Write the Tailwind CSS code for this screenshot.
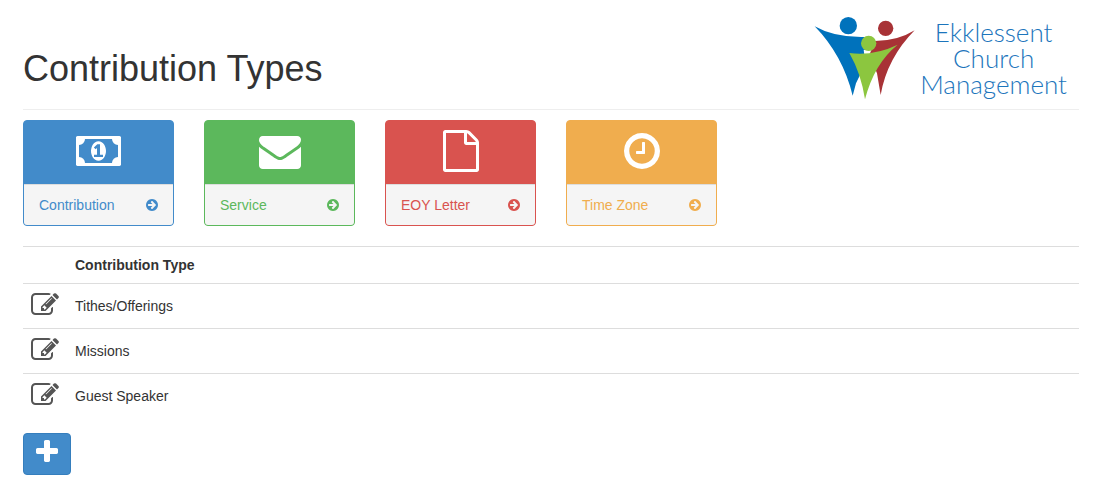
<!doctype html>
<html lang="en">
<head>
  <meta charset="UTF-8">
  <meta name="viewport" content="width=device-width, initial-scale=1.0">
  <title>Contribution Types</title>
  <script src="https://cdn.jsdelivr.net/npm/@tailwindcss/browser@4"></script>
</head>
<body class="bg-white pr-6 pl-[23px] font-['Liberation_Sans',Arial,sans-serif] text-sm text-[#333]">
  <svg class="hidden">
    <symbol id="arrow" viewBox="128 0 1536 1792">
      <path d="M1413 896q0-27-18-45l-91-91-362-362q-18-18-45-18t-45 18l-91 91q-18 18-18 45t18 45l189 189h-502q-26 0-45 19t-19 45v128q0 26 19 45t45 19h502l-189 189q-18 18-18 45t18 45l91 91q18 18 45 18t45-18l362-362 91-91q18-18 18-45zm251 0q0 209-103 385.5t-279.5 279.5-385.5 103-385.5-103-279.5-279.5-103-385.5 103-385.5 279.5-279.5 385.5-103 385.5 103 279.5 279.5 103 385.5z"/>
    </symbol>
    <symbol id="edit" viewBox="0 0 1792 1792">
      <path d="M888 1184l116-116-152-152-116 116v56h96v96h56zm440-720q-16-16-33 1l-350 350q-17 17-1 33t33-1l350-350q17-17 1-33zm80 594v190q0 119-84.5 203.5t-203.5 84.5h-832q-119 0-203.5-84.5t-84.5-203.5v-832q0-119 84.5-203.5t203.5-84.5h832q63 0 117 25 15 7 18 23 3 17-9 29l-49 49q-14 14-32 8-23-6-45-6h-832q-66 0-113 47t-47 113v832q0 66 47 113t113 47h832q66 0 113-47t47-113v-126q0-13 9-22l64-64q15-15 35-7t20 29zm-96-738l288 288-672 672h-288v-288zm444 132l-92 92-288-288 92-92q28-28 68-28t68 28l152 152q28 28 28 68t-28 68z"/>
    </symbol>
  </svg>

  <header class="flex items-end justify-between border-b border-[#eee] pt-4">
    <h1 class="pb-5 text-4xl leading-10">Contribution Types</h1>
    <div class="flex items-center gap-1 pr-3 pb-[9px]">
      <svg class="h-[84px] w-[102px]" viewBox="39 33 306 252">
        <path fill="#0072bc" d="M41 64Q100 98 190 96L206 150L165 235L155 272Q125 150 41 64Z"/>
        <path fill="#a83236" d="M341 76Q290 108 222 108L205 150L228 205L239 270Q258 160 341 76Z"/>
        <path fill="#fff" d="M188 134L206 136L204 148L190 149Z"/>
        <circle cx="142" cy="62" r="26" fill="#0072bc"/>
        <circle cx="254" cy="70" r="23" fill="#a83236"/>
        <path fill="#8cc63f" d="M145 144Q220 153 290 119Q220 175 192 283Q180 205 145 144Z"/>
        <circle cx="203" cy="115" r="23" fill="#8cc63f"/>
      </svg>
      <p class="text-center font-['Lato',sans-serif] text-[26px] leading-[26px] font-light text-[#1c75bc]">Ekklessent<br>Church<br>Management</p>
    </div>
  </header>

  <nav class="mt-[10px] flex flex-wrap gap-[30px]">
    <a href="#" class="w-[151px] overflow-hidden rounded border border-[#428bca] bg-[#428bca] text-[#428bca]">
      <div class="flex justify-center pt-[9px] pb-3">
        <svg class="h-[42px] w-[45px] fill-white" viewBox="0 0 1920 1792"><path d="M768 1152h384v-96h-128v-448h-114l-148 137 77 80q42-37 55-57h2v288h-128v96zm512-256q0 70-21 142t-59.5 134-101.5 101-138 39-138-39-101.5-101-59.5-134-21-142 21-142 59.5-134 101.5-101 138-39 138 39 101.5 101 59.5 134 21 142zm512 256v-512q-106 0-181-75t-75-181h-1152q0 106-75 181t-181 75v512q106 0 181 75t75 181h1152q0-106 75-181t181-75zm128-832v1152q0 26-19 45t-45 19h-1792q-26 0-45-19t-19-45v-1152q0-26 19-45t45-19h1792q26 0 45 19t19 45z"/></svg>
      </div>
      <div class="flex items-center justify-between border-t border-[#ddd] bg-[#f5f5f5] px-[15px] py-[10px]">
        <span>Contribution</span>
        <svg class="h-[14px] w-3 fill-current"><use href="#arrow"/></svg>
      </div>
    </a>
    <a href="#" class="w-[151px] overflow-hidden rounded border border-[#5cb85c] bg-[#5cb85c] text-[#5cb85c]">
      <div class="flex justify-center pt-[9px] pb-3">
        <svg class="size-[42px] fill-white" viewBox="0 0 1792 1792"><path d="M1792 710v794q0 66-47 113t-113 47h-1472q-66 0-113-47t-47-113v-794q44 49 101 87 362 246 497 345 57 42 92.5 65.5t94.5 48 110 24.5h2q51 0 110-24.5t94.5-48 92.5-65.5q170-123 498-345 57-39 100-87zm0-294q0 79-49 151t-122 123q-376 261-468 325-10 7-42.5 31t-54 38.5-52 32.5-57.5 27-50 9h-2q-23 0-50-9t-57.5-27-52-32.5-54-38.5-42.5-31q-91-64-262-182.5t-205-142.5q-62-42-117-115.5t-55-136.5q0-78 41.5-130t118.5-52h1472q65 0 112.5 47t47.5 113z"/></svg>
      </div>
      <div class="flex items-center justify-between border-t border-[#ddd] bg-[#f5f5f5] px-[15px] py-[10px]">
        <span>Service</span>
        <svg class="h-[14px] w-3 fill-current"><use href="#arrow"/></svg>
      </div>
    </a>
    <a href="#" class="w-[151px] overflow-hidden rounded border border-[#d9534f] bg-[#d9534f] text-[#d9534f]">
      <div class="flex justify-center pt-[9px] pb-3">
        <svg class="size-[42px] fill-white" viewBox="0 0 1792 1792"><path d="M1596 380q28 28 48 76t20 88v1152q0 40-28 68t-68 28h-1344q-40 0-68-28t-28-68v-1600q0-40 28-68t68-28h896q40 0 88 20t76 48zm-444-244v376h376q-10-29-22-41l-313-313q-12-12-41-22zm384 1528v-1024h-416q-40 0-68-28t-28-68v-416h-768v1536h1280z"/></svg>
      </div>
      <div class="flex items-center justify-between border-t border-[#ddd] bg-[#f5f5f5] px-[15px] py-[10px]">
        <span>EOY Letter</span>
        <svg class="h-[14px] w-3 fill-current"><use href="#arrow"/></svg>
      </div>
    </a>
    <a href="#" class="w-[151px] overflow-hidden rounded border border-[#f0ad4e] bg-[#f0ad4e] text-[#f0ad4e]">
      <div class="flex justify-center pt-[9px] pb-3">
        <svg class="size-[42px] fill-white" viewBox="0 0 1792 1792"><path d="M1024 544v448q0 14-9 23t-23 9h-320q-14 0-23-9t-9-23v-64q0-14 9-23t23-9h224v-352q0-14 9-23t23-9h64q14 0 23 9t9 23zm416 352q0-148-73-273t-198-198-273-73-273 73-198 198-73 273 73 273 198 198 273 73 273-73 198-198 73-273zm224 0q0 209-103 385.5t-279.5 279.5-385.5 103-385.5-103-279.5-279.5-103-385.5 103-385.5 279.5-279.5 385.5-103 385.5 103 279.5 279.5 103 385.5z"/></svg>
      </div>
      <div class="flex items-center justify-between border-t border-[#ddd] bg-[#f5f5f5] px-[15px] py-[10px]">
        <span>Time Zone</span>
        <svg class="h-[14px] w-3 fill-current"><use href="#arrow"/></svg>
      </div>
    </a>
  </nav>

  <table class="mt-5 w-full text-left">
    <thead>
      <tr class="border-t border-[#ddd]">
        <th class="w-11 p-2"></th>
        <th class="p-2">Contribution Type</th>
      </tr>
    </thead>
    <tbody>
      <tr class="border-t border-[#ddd]">
        <td class="px-2 pt-[7px] pb-[9px]"><a href="#" aria-label="Edit Tithes/Offerings"><svg class="size-7 fill-[#555]"><use href="#edit"/></svg></a></td>
        <td class="p-2">Tithes/Offerings</td>
      </tr>
      <tr class="border-t border-[#ddd]">
        <td class="px-2 pt-[7px] pb-[9px]"><a href="#" aria-label="Edit Missions"><svg class="size-7 fill-[#555]"><use href="#edit"/></svg></a></td>
        <td class="p-2">Missions</td>
      </tr>
      <tr class="border-t border-[#ddd]">
        <td class="px-2 pt-[7px] pb-[9px]"><a href="#" aria-label="Edit Guest Speaker"><svg class="size-7 fill-[#555]"><use href="#edit"/></svg></a></td>
        <td class="p-2">Guest Speaker</td>
      </tr>
    </tbody>
  </table>

  <button type="button" aria-label="Add contribution type" class="mt-[15px] rounded border border-[#357ebd] bg-[#428bca] px-[9px] pt-1 pb-2">
    <svg class="size-7 fill-white" viewBox="0 0 1792 1792"><path d="M1600 736v192q0 40-28 68t-68 28h-416v416q0 40-28 68t-68 28h-192q-40 0-68-28t-28-68v-416h-416q-40 0-68-28t-28-68v-192q0-40 28-68t68-28h416v-416q0-40 28-68t68-28h192q40 0 68 28t28 68v416h416q40 0 68 28t28 68z"/></svg>
  </button>
</body>
</html>
